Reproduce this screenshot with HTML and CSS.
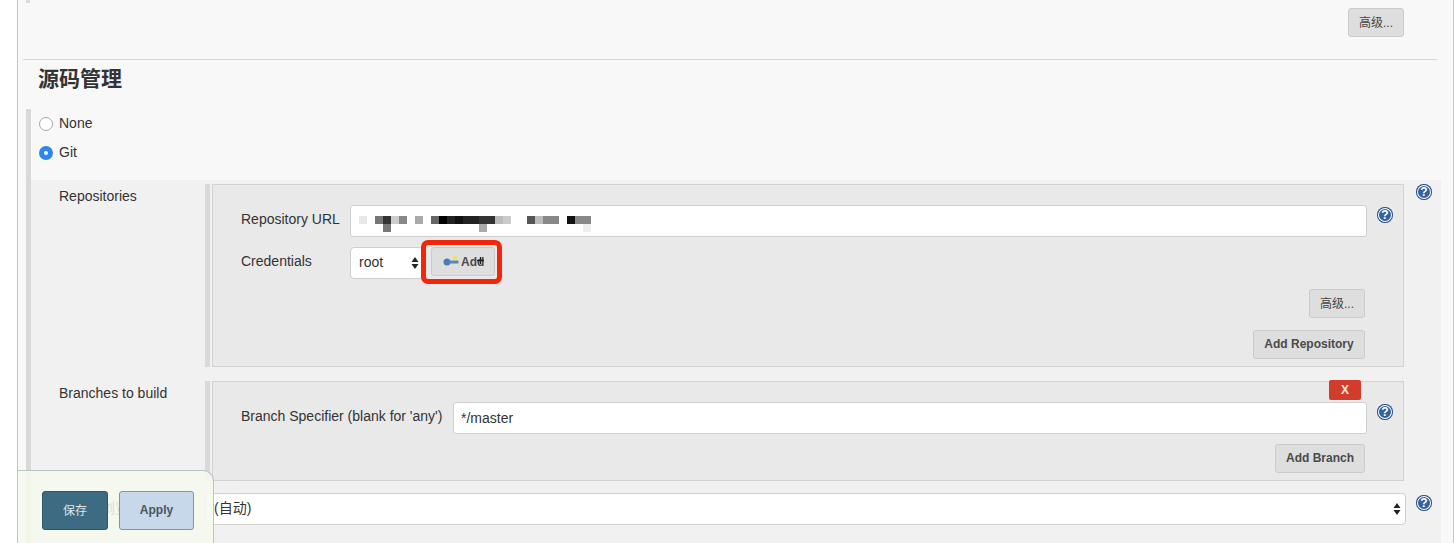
FILE: index.html
```html
<!DOCTYPE html>
<html lang="zh">
<head>
<meta charset="utf-8">
<title>源码管理</title>
<link rel="stylesheet" href="styles.css">
</head>
<body>
<div class="page">
  <span class="top-tick"></span>
  <div class="adv-top"><button class="btn btn-adv">高级...</button></div>
  <hr class="divider">
  <h2 class="section-title">源码管理</h2>
  <div class="scm">
    <label class="radio-row"><span class="radio"></span>None</label>
    <label class="radio-row"><span class="radio radio-on"></span>Git</label>
    <div class="git-panel">
      <div class="row-label">Repositories</div>
      <div class="main-cell">
        <div class="box box-repo">
          <div class="form-row">
            <div class="form-label form-label-repo">Repository URL</div>
            <div class="field field-grow">
              <svg class="pixels" width="232" height="16" viewBox="0 0 232 16" shape-rendering="crispEdges">
                <rect x="0" y="0" width="8" height="8" fill="#e8e8e8"/>
                <rect x="16" y="0" width="8" height="8" fill="#777"/>
                <rect x="24" y="0" width="8" height="8" fill="#333"/>
                <rect x="32" y="0" width="8" height="8" fill="#ccc"/>
                <rect x="40" y="0" width="8" height="8" fill="#888"/>
                <rect x="56" y="0" width="8" height="8" fill="#aaa"/>
                <rect x="72" y="0" width="8" height="8" fill="#666"/>
                <rect x="80" y="0" width="8" height="8" fill="#000"/>
                <rect x="88" y="0" width="8" height="8" fill="#222"/>
                <rect x="96" y="0" width="8" height="8" fill="#111"/>
                <rect x="104" y="0" width="16" height="8" fill="#222"/>
                <rect x="120" y="0" width="16" height="8" fill="#333"/>
                <rect x="136" y="0" width="8" height="8" fill="#bbb"/>
                <rect x="144" y="0" width="8" height="8" fill="#ccc"/>
                <rect x="168" y="0" width="8" height="8" fill="#555"/>
                <rect x="176" y="0" width="8" height="8" fill="#bbb"/>
                <rect x="184" y="0" width="16" height="8" fill="#888"/>
                <rect x="208" y="0" width="8" height="8" fill="#111"/>
                <rect x="216" y="0" width="16" height="8" fill="#888"/>
                <rect x="24" y="8" width="8" height="8" fill="#777"/>
                <rect x="120" y="8" width="8" height="8" fill="#aaa"/>
                <rect x="224" y="8" width="8" height="8" fill="#eee"/>
              </svg>
            </div>
            <span class="help help-inner">?</span>
          </div>
          <div class="form-row form-row-cred">
            <div class="form-label form-label-repo">Credentials</div>
            <div class="select select-root"><span class="select-text">root</span>
              <svg class="arrows" width="8" height="14" viewBox="0 0 8 14"><path d="M4 1 7.5 6H.5zM4 13 .5 8h7z"/></svg>
            </div>
            <div class="add-wrap">
              <button class="btn btn-add">
                <svg class="key" width="16" height="11" viewBox="0 0 16 11"><circle cx="12" cy="2.4" r="2.3" fill="#ecdf6a"/><circle cx="4" cy="6" r="3.5" fill="#4f7bb0"/><path d="M6 4.6h9.500v2.900H6z" fill="#5a84b5"/></svg>
                Add
              </button>
              <svg class="cursor" width="7" height="7" viewBox="0 0 7 7"><path d="M3.500 0v7M0 3.500h7" stroke="#222" stroke-width="1.300"/></svg>
              <span class="highlight"></span>
            </div>
          </div>
          <div class="actions actions-adv"><button class="btn btn-adv">高级...</button></div>
          <div class="actions actions-add"><button class="btn btn-repo">Add Repository</button></div>
        </div>
      </div>
      <div class="help-cell"><span class="help">?</span></div>

      <div class="row-label">Branches to build</div>
      <div class="main-cell">
        <div class="box box-branch">
          <button class="btn-x">X</button>
          <div class="form-row">
            <div class="form-label form-label-branch">Branch Specifier (blank for 'any')</div>
            <div class="field field-grow field-branch">*/master</div>
            <span class="help help-inner">?</span>
          </div>
          <div class="actions actions-add"><button class="btn btn-branch">Add Branch</button></div>
        </div>
      </div>
      <div class="help-cell"></div>

      <div class="row-label row-label-last">源码库浏览器</div>
      <div class="select select-wide"><span class="select-text">(自动)</span>
        <svg class="arrows" width="8" height="14" viewBox="0 0 8 14"><path d="M4 1 7.5 6H.5zM4 13 .5 8h7z"/></svg>
      </div>
      <div class="help-cell help-cell-last"><span class="help">?</span></div>
    </div>
  </div>
  <div class="save-bar">
    <button class="btn-save">保存</button>
    <button class="btn-apply">Apply</button>
  </div>
</div>
</body>
</html>
```
FILE: styles.css
```css
* { box-sizing: border-box; }
html, body { margin: 0; padding: 0; background: #fff; }
body {
  font-family: "Liberation Sans", "Noto Sans CJK SC", sans-serif;
  font-size: 14px;
  color: #333;
  overflow: hidden;
}
.page {
  position: relative;
  width: 1437px;
  height: 543px;
  margin-left: 17px;
  padding-top: 8px;
  background: #f8f8f8;
  border-left: 1px solid #c6c6c6;
  border-right: 1px solid #c6c6c6;
  overflow: hidden;
}
.top-tick {
  position: absolute;
  left: 8px;
  top: 0;
  width: 4px;
  height: 3px;
  background: #dcdcdc;
}
.adv-top {
  display: flex;
  justify-content: flex-end;
  padding-right: 49px;
}
.divider {
  height: 1px;
  margin: 22px 16px 0 5px;
  border: 0;
  background: #d6d6d6;
}
.section-title {
  height: 38px;
  margin: 0;
  padding-left: 20px;
  font-size: 21px;
  line-height: 38px;
  font-weight: 700;
  color: #333;
}
.scm {
  margin: 11px 0 0 8px;
  height: 434px;
  border-left: 5px solid #d9d9d9;
}
.radio-row {
  display: flex;
  align-items: center;
  gap: 6px;
  height: 29px;
  padding: 0 0 1px 8px;
  line-height: 16px;
}
.radio {
  width: 14px;
  height: 14px;
  margin-top: 2px;
  border: 1px solid #a9a9a9;
  border-radius: 50%;
  background: #fff;
}
.radio-on {
  border: 5px solid #2d86ea;
}
.git-panel {
  display: grid;
  grid-template-columns: 174px 1199px 37px;
  grid-auto-rows: min-content;
  row-gap: 14px;
  width: 1410px;
  height: 380px;
  margin-top: 13px;
  padding-top: 4px;
  background: #f1f1f1;
}
.row-label {
  padding: 4px 0 0 28px;
  line-height: 16px;
}
.row-label-last {
  margin-top: -2px;
  padding-top: 7px;
}
.main-cell {
  border-left: 5px solid #d9d9d9;
  padding-left: 2px;
}
.help-cell { padding-left: 12px; }
.help-cell-last { margin-top: -2px; padding-top: 2px; }
.help {
  display: flex;
  align-items: center;
  justify-content: center;
  width: 16px;
  height: 16px;
  background: #34619f;
  border-radius: 50%;
  box-shadow: inset 0 0 0 1px #24477f, inset 0 0 0 2px #fff;
  color: #fff;
  font-size: 12px;
  font-weight: 700;
  line-height: 16px;
}
.help-inner { flex: none; margin: 2px 0 0 10px; }
.box {
  position: relative;
  width: 1192px;
  padding: 20px 10px 7px 28px;
  background: #e9e9e9;
  border: 1px solid #d2d2d2;
}
.box-repo { height: 183px; }
.box-branch { height: 100px; }
.form-row {
  display: flex;
  align-items: flex-start;
}
.form-row-cred { margin-top: 10px; }
.form-label { line-height: 28px; }
.form-label-repo { flex: 0 0 109px; }
.form-label-branch { flex: 0 0 212px; }
.field {
  display: flex;
  align-items: center;
  height: 32px;
  padding-left: 8px;
  background: #fff;
  border: 1px solid #cfcfcf;
  border-radius: 3px;
  line-height: 30px;
}
.field-grow { flex: 1; }
.field-branch { padding-left: 7px; }
.pixels { flex: none; margin-top: 6px; }
.select {
  display: flex;
  align-items: center;
  justify-content: space-between;
  height: 32px;
  padding: 0 4px 0 8px;
  background: #fff;
  border: 1px solid #cfcfcf;
  border-radius: 4px;
}
.select-text { margin-top: -2px; }
.select-root { flex: 0 0 73px; padding-right: 3px; }
.select-wide {
  width: 1201px;
  margin-top: -2px;
}
.select-wide .select-text { margin-top: -4px; }
.arrows { fill: #222; }
.btn {
  height: 29px;
  padding: 0 0 2px;
  background: #dedede;
  border: 1px solid #cbcbcb;
  border-radius: 3px;
  color: #4a4a4a;
  font-family: "Liberation Sans", "Noto Sans CJK SC", sans-serif;
  font-size: 12px;
  font-weight: 700;
}
.btn-adv { width: 56px; font-weight: 400; color: #444; }
.btn-repo { width: 112px; }
.btn-branch { width: 90px; }
.add-wrap {
  position: relative;
  margin-left: 8px;
}
.btn-add {
  display: flex;
  align-items: center;
  gap: 2px;
  width: 64px;
  padding: 0 0 0 11px;
}
.key { flex: none; }
.cursor {
  position: absolute;
  left: 46px;
  top: 10px;
}
.highlight {
  position: absolute;
  left: -10px;
  top: -7px;
  width: 81px;
  height: 44px;
  border: 5px solid #f4260a;
  border-radius: 7px;
}
.actions {
  display: flex;
  justify-content: flex-end;
  padding-right: 28px;
}
.actions-adv { margin-top: 10px; }
.actions-add { margin-top: 12px; }
.box-branch .actions-add { margin-top: 10px; }
.btn-x {
  position: absolute;
  left: 1116px;
  top: -2px;
  width: 32px;
  height: 20px;
  padding: 0;
  background: #d23c2c;
  border: 0;
  border-radius: 2px;
  color: #fbe4dc;
  font-family: "Liberation Sans", sans-serif;
  font-size: 12px;
  font-weight: 700;
}
.save-bar {
  position: absolute;
  left: 0;
  top: 470px;
  display: flex;
  gap: 11px;
  width: 196px;
  height: 73px;
  padding: 20px 0 0 24px;
  background: rgba(244, 249, 239, 0.85);
  border: 1px solid #b8c8bf;
  border-left: 0;
  border-bottom: 0;
  border-radius: 0 11px 0 0;
}
.btn-save, .btn-apply {
  height: 39px;
  padding: 0 0 2px;
  border-radius: 3px;
  font-family: "Liberation Sans", "Noto Sans CJK SC", sans-serif;
  font-size: 12px;
}
.btn-save {
  width: 66px;
  background: #3d6c82;
  border: 1px solid #2f5568;
  color: #dce6ea;
}
.btn-apply {
  width: 75px;
  background: #c6d8ea;
  border: 1px solid #6f97bf;
  color: #4a5560;
  font-weight: 700;
}
```
